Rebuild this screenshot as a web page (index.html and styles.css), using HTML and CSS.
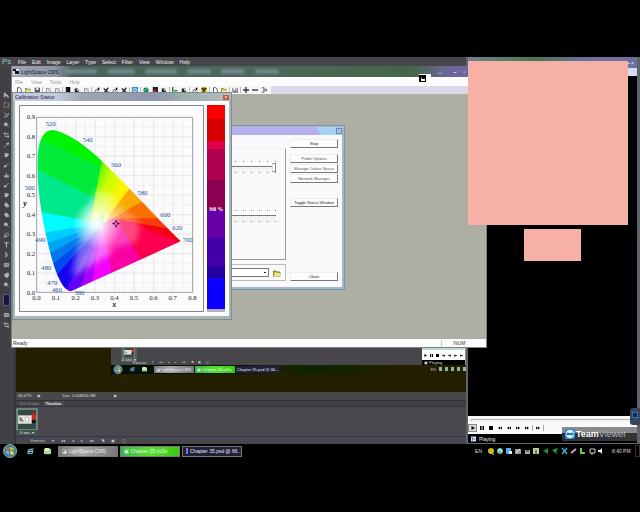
FILE: index.html
```html
<!DOCTYPE html>
<html lang="en">
<head>
<meta charset="utf-8">
<title>LightSpace CMS</title>
<link rel="stylesheet" href="styles.css">
</head>
<body>
<svg class="defs" aria-hidden="true">
  <symbol id="page" viewBox="0 0 8 8"><path d="M2 1h3l2 2v5H2z" fill="#fff" stroke="#333"/></symbol>
  <symbol id="open" viewBox="0 0 8 8"><path d="M0 2h3l1 1h3v4H0z" fill="#c5c437" stroke="#554" stroke-width=".7"/><path d="M2 4h6L7 7H1z" fill="#eee97a"/></symbol>
  <symbol id="save" viewBox="0 0 8 8"><path d="M1 1h7v7H1z" fill="#555b66"/><path d="M3 1h3v3H3z" fill="#eee"/></symbol>
  <symbol id="undo" viewBox="0 0 8 8"><path d="M2 7V2h3l2 2v3M4 5l3-3" fill="none" stroke="#777"/></symbol>
  <symbol id="block" viewBox="0 0 8 8"><path d="M1 0h6v8H1z"/><path d="M2 2h1v4H2z" fill="#777"/></symbol>
  <symbol id="probe" viewBox="0 0 8 8"><path d="M1 2h4l2 3-2 3H1z" fill="#222"/><circle cx="5" cy="4" r="1.3" fill="#ddd"/></symbol>
  <symbol id="graph" viewBox="0 0 8 8"><path d="M0 7h8M1 6l2-3 2 2 2-4" fill="none" stroke="#333"/><path d="M5 1h2v3H5z"/></symbol>
  <symbol id="cross" viewBox="0 0 8 8"><path d="M1 2l6 5M7 1L2 7" stroke="#222" stroke-width="1.6"/></symbol>
  <symbol id="blue" viewBox="0 0 8 8"><path d="M0 0h8v8H0z" fill="#3292cf"/><circle cx="4" cy="4" r="2" fill="none" stroke="#fff"/></symbol>
  <symbol id="green" viewBox="0 0 8 8"><circle cx="4" cy="4" r="3.5" fill="#147b61"/><path d="M2 5l4-3" stroke="#bff"/></symbol>
  <symbol id="cube" viewBox="0 0 8 8"><path d="M1 0h7v8H1z" fill="#222"/><path d="M2 4h4v3H2z" fill="#b23"/></symbol>
  <symbol id="bars" viewBox="0 0 8 8"><path d="M1 0v8M3 5h4" stroke="#188d29" stroke-width="2"/><path d="M4 7h4" stroke="#db2" stroke-width="2"/></symbol>
  <symbol id="hazard" viewBox="0 0 8 8"><circle cx="4" cy="4" r="4" fill="#dfb300"/><path d="M4 4L1 2l1-1zM4 4l3-2-1-1zM4 4v4H2z" fill="#111" stroke="#111"/></symbol>
  <symbol id="chart" viewBox="0 0 8 8"><path d="M1 1v6h7M3 4v3M5 2v5M7 1v6" fill="none" stroke="#444"/></symbol>
  <symbol id="plus" viewBox="0 0 8 8"><path d="M4 0v8M0 4h8" stroke="#333" stroke-width="1.8"/></symbol>
  <symbol id="minus" viewBox="0 0 8 8"><path d="M0 4h8" stroke="#333" stroke-width="1.8"/></symbol>
  <symbol id="exit" viewBox="0 0 8 8"><path d="M1 1h3v6H1M3 4h5M6 2l2 2-2 2" fill="none" stroke="#444"/></symbol>

  <symbol id="move" viewBox="0 0 8 8"><path d="M1 1v6l2-2h3zM6 5v3M4.500 6.500h3"/></symbol>
  <symbol id="marquee" viewBox="0 0 8 8"><path d="M1 1h6v6H1z" fill="none" stroke-dasharray="1.500 1"/></symbol>
  <symbol id="lasso" viewBox="0 0 8 8"><path d="M1 1l2 3 4-2-2 4H2l-1 2" fill="none"/></symbol>
  <symbol id="wand" viewBox="0 0 8 8"><circle cx="3" cy="3" r="2"/><path d="M4 4l3 3"/></symbol>
  <symbol id="crop" viewBox="0 0 8 8"><path d="M2 0v6h6M0 2h6v6" fill="none"/></symbol>
  <symbol id="dropper" viewBox="0 0 8 8"><path d="M1 7l4-4M4 2l2 2 1-3z"/></symbol>
  <symbol id="heal" viewBox="0 0 8 8"><path d="M1 5l3-3 3 1-3 4z" /><path d="M1 2h3"/></symbol>
  <symbol id="brush" viewBox="0 0 8 8"><path d="M7 1L3 5"/><path d="M1 7l1-3 2 2z"/></symbol>
  <symbol id="stamp" viewBox="0 0 8 8"><path d="M4 1v4M1 5h6v1H1zM1 8h6"/></symbol>
  <symbol id="bucket" viewBox="0 0 8 8"><path d="M1 3l3-2 3 4-3 2zM7 5v2"/></symbol>
  <symbol id="pen" viewBox="0 0 8 8"><path d="M1 7l1-4 3-2 2 2-2 3z" fill="none"/><path d="M1 7l3-3"/></symbol>
  <symbol id="type" viewBox="0 0 8 8"><path d="M1 1h6M4 1v6" stroke-width="1.500"/></symbol>
  <symbol id="arrow" viewBox="0 0 8 8"><path d="M3 0v7l1-2h2z" fill="none"/></symbol>
  <symbol id="shape" viewBox="0 0 8 8"><path d="M1 2h6v4H1z" fill="#888"/></symbol>
  <symbol id="hand" viewBox="0 0 8 8"><path d="M1 4l2 3h3l1-5-1 2V1L5 4V1L3 4V2z"/></symbol>

  <symbol id="orb" viewBox="0 0 14 14"><circle cx="7" cy="7" r="6.500" fill="#4b7b96" stroke="#98adb5"/><path d="M3 4l3-1v3H3z" fill="#e16b36"/><path d="M7 3l4 1-1 3-3-1z" fill="#9ccc46"/><path d="M3 7h3v4L3 9z" fill="#67b8ee"/><path d="M7 7l4 1-1 3-3-1z" fill="#f4cf4a"/></symbol>
  <symbol id="ie" viewBox="0 0 8 8"><circle cx="4" cy="4" r="2.500" fill="none" stroke="#4da7ec" stroke-width="1.500"/><path d="M2 4h4" stroke="#9fdcff"/><path d="M0 7C1 3 5 0 8 1" fill="none" stroke="#d4bd50" stroke-width=".8"/></symbol>
  <symbol id="folder" viewBox="0 0 8 8"><path d="M0 1h8v6H0z" fill="#a7d9b0"/><path d="M1 0h5v3H1z" fill="#f4f1b4"/></symbol>
  <symbol id="play" viewBox="0 0 8 8"><path d="M1 0l7 4-7 4z"/></symbol>
  <symbol id="pause" viewBox="0 0 8 8"><path d="M0 0h3v8H0zM5 0h3v8H5z"/></symbol>
  <symbol id="stop" viewBox="0 0 8 8"><path d="M0 0h8v8H0z"/></symbol>
  <symbol id="prev" viewBox="0 0 8 8"><path d="M4 1v6L0 4zM8 1v6L4 4z"/></symbol>
  <symbol id="next" viewBox="0 0 8 8"><path d="M0 1l4 3-4 3zM4 1l4 3-4 3z"/></symbol>
  <symbol id="thumb" viewBox="0 0 21 21"><path d="M0 0h21v21H0z" fill="#354944"/><path d="M1 1h19v20H1z" fill="none" stroke="#9fbbad"/><path d="M2 7h17v8H2z" fill="#e5e5e5"/><path d="M15 5h4v6h-4z" fill="#cf2718"/><path d="M15 11h4v4h-4z" fill="#111"/><path d="M3 8l4 5H3z" fill="#4c8"/><path d="M4 9l3 4" stroke="#d33"/><path d="M9 9h3v4H9z" fill="#fff" stroke="#999" stroke-width=".5"/></symbol>
</svg>

<main class="desktop">
  <section class="ps" aria-label="Photoshop">
    <nav class="ps-menu">
      <b>Ps</b><button>File</button><button>Edit</button><button>Image</button><button>Layer</button><button>Type</button><button>Select</button><button>Filter</button><button>View</button><button>Window</button><button>Help</button>
    </nav>
    <div class="ps-main">
      <div class="tools">
        <svg><use href="#move"/></svg><svg><use href="#marquee"/></svg><svg><use href="#lasso"/></svg><svg><use href="#wand"/></svg><svg><use href="#crop"/></svg><svg><use href="#dropper"/></svg><svg><use href="#heal"/></svg><svg><use href="#brush"/></svg><svg><use href="#stamp"/></svg><svg><use href="#brush"/></svg><svg><use href="#heal"/></svg><svg><use href="#bucket"/></svg><svg><use href="#bucket"/></svg><svg><use href="#wand"/></svg><svg><use href="#pen"/></svg><svg><use href="#type"/></svg><svg><use href="#arrow"/></svg><svg><use href="#shape"/></svg><svg><use href="#hand"/></svg><svg><use href="#wand"/></svg>
        <i class="swatch"></i>
        <svg><use href="#shape"/></svg><svg><use href="#crop"/></svg>
      </div>
      <div class="workspace">
        <div class="canvas">
          <div class="nested">
            <div class="nested-top">
              <div class="nested-frame"><svg><use href="#thumb"/></svg><span>0 sec. ▾</span></div>
              <div class="nested-controls"><span>Forever</span><span>▾</span><span>◂◂</span><span>◂</span><span>▸</span><span>▸▸</span><span>◥</span><span>▣</span><span>▢</span></div>
              <div class="nested-player">
                <div><svg><use href="#play"/></svg><svg><use href="#pause"/></svg><svg><use href="#stop"/></svg><svg><use href="#prev"/></svg><svg><use href="#prev"/></svg><svg><use href="#next"/></svg><svg><use href="#next"/></svg></div>
                <p>▣ Playing</p>
              </div>
            </div>
            <div class="nested-bar">
              <svg class="orb"><use href="#orb"/></svg><svg><use href="#ie"/></svg><svg><use href="#folder"/></svg>
              <span class="task grey">◪ LightSpace CMS</span><span class="task green">▣ Chapter 35.m2ts</span><span class="task dark">Chapter 35.psd @ 66...</span>
              <span class="nested-tray">EN <i></i><i></i><i></i><i></i><i></i></span>
            </div>
          </div>
        </div>
        <div class="doc-status"><span>66.67%</span><span>◉</span><span class="doc">Doc: 5.00M/55.9M</span><span>▶</span></div>
        <div class="tabs"><button>Mini Bridge</button><button class="on">Timeline</button></div>
        <div class="timeline"><div class="frame"><svg><use href="#thumb"/></svg><span>0 sec. ▾</span></div></div>
        <div class="tl-controls"><span>Forever</span><span>▾</span><span>◂◂</span><span>◂</span><span>▸</span><span>▸▸</span><span>◥</span><span>▣</span><span>▢</span></div>
      </div>
    </div>
  </section>

  <section class="player" aria-label="Media player">
    <div class="player-title"><i></i><span>▬ ▪ ×</span></div>
    <div class="video"></div>
    <div class="seek"><i></i></div>
    <div class="transport">
      <button class="on" aria-label="Play"><svg><use href="#play"/></svg></button><button aria-label="Pause"><svg><use href="#pause"/></svg></button><button aria-label="Stop"><svg><use href="#stop"/></svg></button><button aria-label="Previous"><svg><use href="#prev"/></svg></button><button aria-label="Rewind"><svg><use href="#prev"/></svg></button><button aria-label="Forward"><svg><use href="#next"/></svg></button><button aria-label="Next"><svg><use href="#next"/></svg></button><i></i><button aria-label="Step"><svg><use href="#next"/></svg></button><i></i>
    </div>
    <div class="play-status"><svg viewBox="0 0 6 6"><path d="M0 0h6v6H0z" fill="#ddf"/><path d="M2 1v4M3 3h2" stroke="#276"/></svg><span>Playing</span></div>
  </section>

  <section class="ls" aria-label="LightSpace CMS">
    <header class="ls-title">
      <svg viewBox="0 0 6 6"><path d="M0 0h6v6H0z" fill="#ddd"/><path d="M0 0h3v2H0zM2 2h4v3H2z" fill="#112"/></svg>
      <h1>LightSpace CMS</h1>
      <div class="ghosts"><i></i><i></i><i></i><i></i><i></i><i></i></div>
      <div class="win-buttons"><span class="resize">↔</span><span>–</span><span>▫</span></div>
    </header>
    <nav class="ls-menu"><button>File</button><button>View</button><button>Tools</button><button>Help</button></nav>
    <div class="ls-tools">
      <svg><use href="#page"/></svg><svg><use href="#open"/></svg><svg><use href="#save"/></svg><i></i><svg><use href="#undo"/></svg><svg><use href="#undo"/></svg><i></i><svg><use href="#block"/></svg><svg><use href="#probe"/></svg><svg><use href="#undo"/></svg><i></i><svg><use href="#graph"/></svg><svg><use href="#cross"/></svg><svg><use href="#graph"/></svg><svg><use href="#cross"/></svg><i></i><svg><use href="#blue"/></svg><i></i><svg><use href="#green"/></svg><svg><use href="#cube"/></svg><svg><use href="#probe"/></svg><i></i><svg><use href="#bars"/></svg><svg><use href="#probe"/></svg><i></i><svg><use href="#graph"/></svg><svg><use href="#hazard"/></svg><i></i><svg><use href="#page"/></svg><svg><use href="#open"/></svg><i></i><svg><use href="#chart"/></svg><i></i><svg><use href="#plus"/></svg><svg><use href="#minus"/></svg><svg><use href="#exit"/></svg>
    </div>
    <div class="ls-body"></div>
    <footer class="ls-status"><span>Ready</span><span class="cell"></span><span class="num">NUM</span></footer>
  </section>

  <section class="dialog" aria-label="Calibration">
    <header><button aria-label="Close window">×</button></header>
    <div class="dialog-body">
      <div class="left">
        <div class="group">
          <div class="slider"><i></i><input type="range" value="100" aria-label="Upper level"><i></i></div>
          <div class="slider"><i></i><input type="range" value="0" aria-label="Lower level"><i></i></div>
        </div>
        <div class="picker"><select aria-label="Preset"><option></option></select><svg><use href="#open"/></svg></div>
      </div>
      <div class="actions">
        <button>Stop</button>
        <div class="trio"><button class="dim">Probe Options</button><button class="dim">Manage Colour Space</button><button class="dim">Network Manager</button></div>
        <button class="toggle">Toggle Status Window</button>
        <button class="close">Close</button>
      </div>
    </div>
  </section>

  <section class="calib" aria-label="Calibration Status">
    <header><h2>Calibration Status</h2><button aria-label="Close">×</button></header>
    <div class="calib-body">
      <svg class="cie" viewBox="57 45 555 621" role="img" aria-label="CIE xy chromaticity diagram">
        <defs>
          <clipPath id="locus"><path d="M213 604C180 602 154 510 139 440C123 368 108 270 113 200C117 148 130 122 156 120C205 126 265 173 320 227C390 295 465 378 542 454Z"/></clipPath>
          <radialGradient id="white" gradientUnits="userSpaceOnUse" cx="292" cy="402" r="75"><stop stop-color="#fff"/><stop offset=".25" stop-color="#fff" stop-opacity=".8"/><stop offset="1" stop-color="#fff" stop-opacity="0"/></radialGradient>
          <linearGradient id="yellow" gradientUnits="userSpaceOnUse" x1="275" y1="260" x2="365" y2="300"><stop stop-color="#4cf000"/><stop offset=".5" stop-color="#c8ff00"/><stop offset="1" stop-color="#fff200"/></linearGradient>
          <filter id="soft"><feGaussianBlur stdDeviation="2"/></filter>
          <filter id="haze" x="-50%" y="-50%" width="200%" height="200%"><feGaussianBlur stdDeviation="9"/></filter>
        </defs>
        <path class="frame-line" d="M58 46H611V665H58z"/>
        <g class="minor"><path d="M139 82V607M197.500 82V607M256 82V607M314.500 82V607M373 82V607M431.500 82V607M490 82V607M548.500 82V607M110 111H578M110 169.500H578M110 228H578M110 286H578M110 344.500H578M110 403H578M110 461H578M110 519.500H578M110 578H578"/></g>
        <g class="major"><path d="M168.500 82V607M227 82V607M285.500 82V607M344 82V607M402.500 82V607M461 82V607M519.500 82V607M110 140.500H578M110 199H578M110 257H578M110 315.500H578M110 374H578M110 432H578M110 490.500H578M110 549H578"/></g>
        <path class="box" d="M110 82H578V607H110z"/>
        <g clip-path="url(#locus)">
          <g filter="url(#soft)">
            <path d="M90 90H600V640H90z" fill="#00f400"/>
            <path d="M90 133L300 228 300 400 90 400z" fill="#00ec38"/>
            <path d="M90 227L305 335 295 410 90 400z" fill="#00e88c"/>
            <path d="M90 360L300 398 290 430 90 440z" fill="#00fcfc"/>
            <path d="M90 434L300 402 290 500 90 500z" fill="#00ccff"/>
            <path d="M90 478L300 404 290 520 90 560z" fill="#00a5f4"/>
            <path d="M90 524L300 406 300 600 90 600z" fill="#0078ec"/>
            <path d="M130 546L300 408 300 600 130 620z" fill="#0048ee"/>
            <path d="M150 578L300 410 330 540 150 640z" fill="#1200ee"/>
            <path d="M192 610L300 412 330 540 213 640z" fill="#6000f4"/>
            <path d="M232 620L300 414 370 530 270 620z" fill="#ac00fa"/>
            <path d="M268 620L305 415 370 535 330 620z" fill="#f400ff"/>
            <path d="M335 620V550L305 400 350 380 435 520V620z" fill="#f800a4"/>
            <path d="M435 530L345 380 390 360 570 460z" fill="#fc0050"/>
            <path d="M570 470L340 375 450 320z" fill="#f60018"/>
            <path d="M500 415L330 385 400 270z" fill="#f83c10"/>
            <path d="M475 385L330 385 400 270z" fill="#f87000"/>
            <path d="M435 330L310 400 370 240z" fill="#f8a800"/>
            <path d="M394 288L310 400 330 200z" fill="#ffe600"/>
            <path d="M310 190L395 270 385 300 345 350 270 400z" fill="url(#yellow)"/>
          </g>
          <g filter="url(#haze)" fill="#fff">
            <path d="M285 300L350 320 310 390 245 400z" opacity=".4"/>
            <path d="M300 385L350 335 420 400 410 455 330 475 325 440z" opacity=".28"/>
            <path d="M290 390L325 440 335 490 215 560 240 440z" opacity=".42"/>
          </g>
          <circle cx="292" cy="402" r="75" fill="url(#white)"/>
        </g>
        <path class="target" d="M348 390v8M348 404v9M337 401h8M351 401h8"/><circle class="target" cx="348" cy="401" r="6" stroke-dasharray="3 3"/>
        <g class="axis end"><text x="105" y="88">0.9</text><text x="105" y="147">0.8</text><text x="105" y="205">0.7</text><text x="105" y="264">0.6</text><text x="105" y="322">0.5</text><text x="105" y="381">0.4</text><text x="105" y="439">0.3</text><text x="105" y="497">0.2</text><text x="105" y="556">0.1</text><text x="105" y="614">0.0</text></g>
        <g class="axis mid"><text x="109" y="631">0.0</text><text x="168" y="631">0.1</text><text x="227" y="631">0.2</text><text x="285" y="631">0.3</text><text x="343" y="631">0.4</text><text x="402" y="631">0.5</text><text x="460" y="631">0.6</text><text x="518" y="631">0.7</text><text x="577" y="631">0.8</text></g>
        <g class="name"><text x="75" y="349">y</text><text x="343" y="652">x</text></g>
        <g class="wave mid"><text x="152" y="109">520</text><text x="263" y="155">540</text><text x="348" y="232">560</text><text x="427" y="314">580</text><text x="496" y="381">600</text><text x="532" y="419">620</text><text x="563" y="457">700</text><text x="89" y="299">500</text><text x="121" y="455">490</text><text x="139" y="540">480</text><text x="157" y="585">470</text><text x="171" y="606">460</text><text x="238" y="614">380</text></g>
      </svg>
      <div class="strip"><i class="s1"></i><i class="s2"></i><i class="s3"></i><i class="s4"></i><i class="s5"></i><i class="s6"></i><i class="s7"></i><i class="s8"></i><i class="s9"></i><i class="s10"></i><b>98 %</b></div>
    </div>
  </section>

  <svg class="cursor" viewBox="0 0 12 12"><path d="M0 0h12v12H0z" fill="#fff"/><path d="M0 1h7v7H0z"/><path d="M2 7V3l1 2h3v2z" fill="#fff"/></svg>

  <div class="mask big"></div>
  <div class="mask small"></div>

  <div class="tv"><svg viewBox="0 0 9 9"><rect width="9" height="9" rx="2" fill="#2091e6"/><circle cx="4.500" cy="4.500" r="3.500" fill="#fff"/><path d="M1 4.500l2-2v1h3v-1l2 2-2 2v-1H3v1z" fill="#1479cc"/></svg><b>Team</b><span>Viewer</span></div>
  <div class="tv-tab"><i></i></div>

  <footer class="taskbar">
    <button class="start" aria-label="Start"><svg><use href="#orb"/></svg></button>
    <svg><use href="#ie"/></svg><svg><use href="#folder"/></svg>
    <div class="tasks">
      <button class="task grey">◪ LightSpace CMS</button><button class="task green">▣ Chapter 35.m2ts</button><button class="task dark"><i></i>Chapter 35.psd @ 66...</button>
    </div>
    <div class="tray"><span>EN</span>
      <svg viewBox="0 0 116 8"><circle cx="4" cy="4" r="3" fill="#c7b628"/><path d="M4 5l3 3" stroke="#dd5"/><circle cx="13" cy="4" r="3" fill="#6db79c"/><path d="M11 4l2-2 2 3" stroke="#fff" fill="none"/><path d="M19 1h5v6h-5z" fill="#55a7e5"/><path d="M22 4h3v3h-3z" fill="#eee"/><path d="M28 2h6v5h-6z" fill="#999"/><path d="M29 6l4-4" stroke="#fff"/><path d="M38 3h5v4h-5z" fill="#aaa"/><path d="M39 4h3" stroke="#222"/><path d="M46 1h6v6h-6z" fill="#c5c89b"/><path d="M48 3h2v4h-2z" fill="#586"/><path d="M56 4l5-3v6z" fill="#198a36"/><path d="M65 3l6-2-2 4 2 3z" fill="#22a34a"/><path d="M75 1l5 6m0-6l-5 6" stroke="#48a7cf" stroke-width="1.500"/><path d="M84 6l5-4" stroke="#d5a0ae" stroke-width="2"/><path d="M94 1v5h4" stroke="#6cc650" stroke-width="2" fill="none"/><path d="M103 2h5v4h-5zM105 6v2" stroke="#ccc" fill="none"/><path d="M111 3h2l2-2v6l-2-2h-2z" fill="#eee"/></svg>
      <time>8:40 PM</time><i></i></div>
  </footer>
</main>
</body>
</html>
```

FILE: styles.css
```css
* { box-sizing: border-box; }
body { margin: 0; background: #000; font: 5px/6px "Noto Sans", "Liberation Sans", sans-serif; }
button { margin: 0; padding: 0; border: 0; background: none; color: inherit; font: inherit; white-space: nowrap; }
h1, h2, p { margin: 0; font: inherit; }
svg { display: block; flex: none; }
.defs { position: absolute; width: 0; height: 0; }
.desktop { position: relative; min-height: 512px; overflow: hidden; font-family: "Liberation Sans", sans-serif; }

/* Photoshop */
.ps { position: absolute; top: 57px; left: 0; right: 0; height: 387px; display: flex; flex-direction: column; background: #47474c; color: #b9b9bd; }
.ps-menu { display: flex; align-items: center; gap: 6px; height: 10px; padding-left: 2px; background: #464549; color: #f2f2f4; }
.ps-menu b { width: 10px; color: #8fc0c4; font-size: 8px; font-weight: 400; }
.ps-main { display: flex; flex: 1; min-height: 0; }
.tools { display: flex; flex-direction: column; gap: 4px; width: 16px; padding: 25px 0 0 3px; background: #414145; border-right: 2px solid #35353b; }
.tools svg { width: 7px; height: 6px; fill: #b4b4b8; stroke: #b4b4b8; stroke-width: 1; }
.swatch { width: 7px; height: 12px; margin: 2px 0; background: #171440; border: 1px solid #5c5a8c; }
.workspace { display: flex; flex: 1; flex-direction: column; margin-right: 174px; min-width: 0; }
.canvas { display: flex; flex: 1; align-items: flex-end; padding: 0 0 18px 95px; background: #222000; }
.nested { flex: 1; height: 28px; }
.nested-top { position: relative; display: flex; align-items: flex-end; height: 19px; background: #47474b; }
.nested-frame { width: 16px; margin-left: 10px; align-self: flex-start; font-size: 4px; line-height: 4px; text-align: center; color: #ddd; background: #53605b; }
.nested-frame svg { width: 16px; height: 12px; }
.nested-controls { display: flex; gap: 5px; margin-left: -4px; font-size: 3px; line-height: 5px; color: #ccc; }
.nested-controls span:first-child { font-size: 4px; }
.nested-player { width: 44px; height: 17px; margin-left: auto; border-top: 2px solid #bdd8d6; background: #fff; border-right: 1px solid #889; }
.nested-player div { display: flex; align-items: center; justify-content: space-around; height: 10px; }
.nested-player svg { width: 3px; height: 3px; }
.nested-player p { height: 5px; padding-left: 2px; background: #000; color: #ddd; font-size: 4px; line-height: 5px; }
.nested-bar { display: flex; align-items: center; gap: 1px; height: 9px; background: linear-gradient(90deg, #021008 110px, #1c2100 170px, #0b2402 200px, #222000 80%); }
.nested-bar > svg { width: 5px; height: 5px; margin-right: 6px; }
.nested-bar > svg.orb { width: 10px; height: 9px; margin: 0 6px 0 2px; }
.nested-bar .task { width: 40px; height: 7px; padding-left: 2px; font-size: 4px; line-height: 7px; }
.nested-bar .dark { width: 44px; padding-left: 1px; }
.nested-tray { display: flex; gap: 3px; margin-left: auto; font-size: 4px; }
.nested-tray i { width: 3px; height: 4px; background: #8db69b; }
.doc-status { display: flex; align-items: center; gap: 5px; height: 8px; padding-left: 2px; background: #48484b; font-size: 4px; color: #ddd; }
.doc-status .doc { margin: 0 14px 0 18px; }
.tabs { display: flex; height: 7px; background: #414145; border-top: 1px solid #303035; border-bottom: 1px solid #303044; }
.tabs button { width: 27px; color: #828287; font-size: 4px; line-height: 5px; }
.tabs .on { width: 21px; background: #4b4b50; color: #e6e6e8; font-weight: 700; }
.timeline { height: 29px; padding: 1px 0 0; background: #48484d; }
.frame { width: 22px; background: #40544d; color: #e6eee8; font-size: 4px; line-height: 5px; text-align: center; }
.frame svg { width: 22px; height: 22px; }
.tl-controls { display: flex; align-items: center; gap: 7px; height: 8px; padding-left: 15px; border-top: 1px solid #34345a; background: #48484c; font-size: 4px; color: #ccc; }

/* Media player */
.player { position: absolute; top: 57px; right: 0; width: 174px; height: 387px; display: flex; flex-direction: column; padding: 0 3px 1px 2px; background: #60636b; }
.player-title { display: flex; align-items: center; height: 19px; padding: 0 3px; background: linear-gradient(90deg, #6e8290, #4c7453 40%, #6c70a0 70%); color: #fff; border-bottom: 8px solid #d9daf3; }
.player-title span { margin-left: auto; }
.video { flex: 1; background: #000; }
.seek { height: 6px; padding: 3px 3px 0; background: #f5f5f7; }
.seek i { display: block; height: 2px; border-top: 1px solid #b4b4b9; border-left: 1px solid #b4b4b9; }
.transport { display: flex; align-items: center; gap: 1px; height: 12px; background: #fafafb; color: #222; }
.transport button { display: flex; align-items: center; justify-content: center; width: 8px; height: 8px; }
.transport .on { width: 9px; border: 1px solid #888; background: #dcdce0; }
.transport svg { width: 4px; height: 4px; }
.transport i { width: 1px; height: 6px; background: #aaa; }
.play-status { display: flex; align-items: center; gap: 3px; height: 9px; padding-left: 3px; background: #000; color: #eee; }
.play-status svg { width: 5px; height: 6px; }

/* LightSpace main window */
.ls { position: absolute; top: 66px; left: 11px; width: 476px; height: 282px; display: flex; flex-direction: column; padding: 0 1px 1px; background: #79847f; }
.ls-title { display: flex; align-items: center; gap: 2px; height: 11px; padding-left: 1px; background: linear-gradient(90deg, #a0a4bb 0, #8b93a3 44px, #4a6356 60px, #50685a 240px, #456649 400px, #6d6697 435px, #6c6aa6); color: #171b28; }
.ls-title svg { width: 6px; height: 6px; }
.ls-title h1 { width: 42px; font-size: 5px; }
.ghosts { display: flex; gap: 10px; }
.ghosts i { width: 32px; height: 5px; border-radius: 3px; background: #92a3bd; filter: blur(1px); opacity: .5; }
.ghosts i:nth-child(2) { width: 28px; }
.ghosts i:nth-child(n+4) { width: 24px; }
.win-buttons { display: flex; gap: 7px; margin-left: auto; padding-right: 21px; color: #fff; font-weight: 700; }
.resize { margin-right: 4px; }
.ls-menu { display: flex; gap: 8px; height: 9px; padding: 0 3px; background: #fdfdfd; color: #999; }
.ls-tools { display: flex; align-items: center; gap: 3px; height: 8px; padding-left: 4px; background: linear-gradient(90deg, #f6f6f8 259px, #d9d9e8 259px); }
.ls-tools svg { width: 6px; height: 6px; }
.ls-tools i { width: 1px; height: 6px; margin: 0 -1px; background: #bbb; }
.ls-body { flex: 1; background: #aeafa4; }
.ls-status { display: flex; align-items: center; height: 8px; padding: 0 1px; background: #fcfcfc; color: #333; }
.cell { width: 12px; height: 7px; margin-left: auto; border-left: 1px solid #ccc; }
.num { width: 32px; border-left: 1px solid #ddd; }

/* Calibration dialog */
.dialog { position: absolute; top: 125px; left: 150px; width: 195px; height: 165px; display: flex; flex-direction: column; padding: 1px 2px 2px; border: 1px solid #7e94a2; background: #a5b5d5; color: #222; }
.dialog header { display: flex; align-items: center; justify-content: flex-end; height: 8px; background: linear-gradient(60deg, #b4aff0 145px, #a7d0f2 146px); }
.dialog header button { width: 6px; height: 6px; border: 1px solid #6a8cab; color: #446; font-size: 4px; line-height: 4px; }
.dialog-body { display: flex; gap: 4px; flex: 1; padding: 4px 4px 6px; background: #fafafc; }
.left { display: flex; flex: 1; flex-direction: column; gap: 4px; }
.group { display: flex; flex: 1; flex-direction: column; gap: 37px; padding: 12px 9px 0; margin-top: 9px; border: 1px solid #999; border-top-color: #eee; }
.slider { display: flex; flex-direction: column; }
.slider > i { height: 1px; background: repeating-linear-gradient(270deg, #777 0 1px, transparent 1px 8px); }
.slider input { appearance: none; width: 100%; height: 10px; margin: 0; background: linear-gradient(#fff 4px, #777 4px 5px, #f4f4f4 5px); }
.slider input::-webkit-slider-thumb { appearance: none; width: 4px; height: 9px; border: 1px solid #888; border-left-color: #ddd; background: #fff; }
.picker { display: flex; align-items: center; gap: 4px; height: 17px; padding: 0 4px; border: 1px solid #bbb; }
.picker select { appearance: none; flex: 1; min-width: 0; height: 9px; padding: 0; border: 1px solid #777; border-radius: 0; background: linear-gradient(#222, #222) right 2px center / 2px 1px no-repeat, #fff; }
.picker svg { width: 8px; height: 8px; }
.actions { display: flex; flex-direction: column; width: 48px; }
.actions button { display: block; width: 100%; height: 9px; font-size: 4px; line-height: 7px; border: 1px solid #eee; border-right-color: #777; border-bottom-color: #777; background: #fdfdfd; }
.actions .dim { color: #555; }
.trio { display: flex; flex-direction: column; gap: 1px; margin-top: 6px; }
.actions .toggle { margin-top: 15px; }
.actions .close { margin-top: auto; }

/* Calibration status window */
.calib { position: absolute; top: 92px; left: 12px; width: 220px; height: 228px; display: flex; flex-direction: column; padding: 0 2px 3px; border: 1px solid #7e8d90; background: #a8b5b5; }
.calib header { display: flex; align-items: center; justify-content: space-between; height: 8px; margin: 0 -2px; padding: 0 2px; background: linear-gradient(90deg, #c3c9df 20%, #9aa8ae 32%, #8f95ad 65%, #9fb0ac 80%, #b4bcc4); color: #1b2238; }
.calib header button { width: 6px; height: 5px; background: #c4573f; color: #fff; line-height: 5px; }
.calib-body { display: flex; flex: 1; gap: 3px; min-height: 0; padding: 4px 4px 5px; background: #fdfdfd; }
.cie { flex: 1; width: 185px; height: 207px; background: #fbfbfb; font-family: "Liberation Serif", serif; font-size: 20px; }
.cie .frame-line { fill: none; stroke: #6d7376; stroke-width: 3; }
.cie .minor path { fill: none; stroke: #ececf1; stroke-width: 2; }
.cie .major path { fill: none; stroke: #dddde3; stroke-width: 2; }
.cie .box { fill: none; stroke: #9a9fae; stroke-width: 3; }
.cie .target { fill: none; stroke: #301018; stroke-width: 3; }
.axis { fill: #222; }
.end { text-anchor: end; }
.mid { text-anchor: middle; }
.name { fill: #111; font-size: 24px; font-style: italic; font-weight: 700; text-anchor: middle; }
.wave { fill: #2450a0; }
.strip { position: relative; display: flex; flex-direction: column; width: 18px; height: 207px; }
.strip b { position: absolute; top: 49%; left: 0; right: 0; color: #fff; font: 700 5px/6px "DejaVu Serif", serif; text-align: center; }
.s1 { flex: 43; background: #fb0000; }
.s2 { flex: 65; background: #d80000; }
.s3 { flex: 23; background: #e0004c; }
.s4 { flex: 92; background: #b1004d; }
.s5 { flex: 90; background: #8b0051; }
.s6 { flex: 85; background: #6700a6; }
.s7 { flex: 85; background: #4300aa; }
.s8 { flex: 35; background: #2400a2; }
.s9 { flex: 90; background: #0b00fd; }
.s10 { flex: 10; background: #b5b1b5; }

/* Overlays */
.cursor { position: absolute; top: 74px; left: 419px; width: 12px; height: 12px; }
.mask { position: absolute; background: #f7b0a6; }
.big { top: 61px; left: 468px; width: 160px; height: 164px; }
.small { top: 229px; left: 524px; width: 57px; height: 32px; }
.tv { position: absolute; top: 427px; right: 3px; width: 75px; height: 14px; display: flex; align-items: center; padding-left: 3px; background: linear-gradient(#8b8b8f 6px, #343438 6px); color: #fff; font-size: 9px; line-height: 10px; }
.tv svg { width: 10px; height: 10px; margin-right: 1px; }
.tv span { color: #b9b9bc; }
.tv-tab { position: absolute; top: 408px; right: 0; width: 10px; height: 17px; padding: 4px 2px; border-radius: 3px 0 0 3px; background: #39435c; }
.tv-tab i { display: block; width: 6px; height: 6px; border: 1px solid #2f74b8; background: #10264f; }

/* Taskbar */
.taskbar { position: absolute; top: 444px; left: 0; right: 0; height: 14px; display: flex; align-items: center; gap: 10px; padding-left: 3px; background: #000; color: #ddd; }
.taskbar > svg { width: 7px; height: 7px; }
.start svg { width: 14px; height: 14px; }
.tasks { display: flex; gap: 2px; margin-left: -3px; }
.task { overflow: hidden; color: #eee; text-align: left; white-space: nowrap; }
.tasks .task { display: flex; align-items: center; gap: 2px; width: 60px; height: 11px; padding-left: 3px; border: 1px solid #777; }
.task.grey { background: linear-gradient(90deg, #777, #aaa 40%, #777); }
.task.green { background: linear-gradient(90deg, #36b44f, #54e22b 50%, #39c913); }
.task.dark { background: #202039; }
.task.dark i { width: 6px; height: 6px; background: #25298a; border: 1px solid #77c; }
.tray { display: flex; align-items: center; gap: 4px; margin-left: auto; }
.tray span { margin-right: 1px; }
.tray svg { width: 116px; height: 8px; }
.tray time { width: 19px; margin-left: 5px; white-space: nowrap; }
.tray i { width: 5px; height: 12px; border: 1px solid #333; }
```
